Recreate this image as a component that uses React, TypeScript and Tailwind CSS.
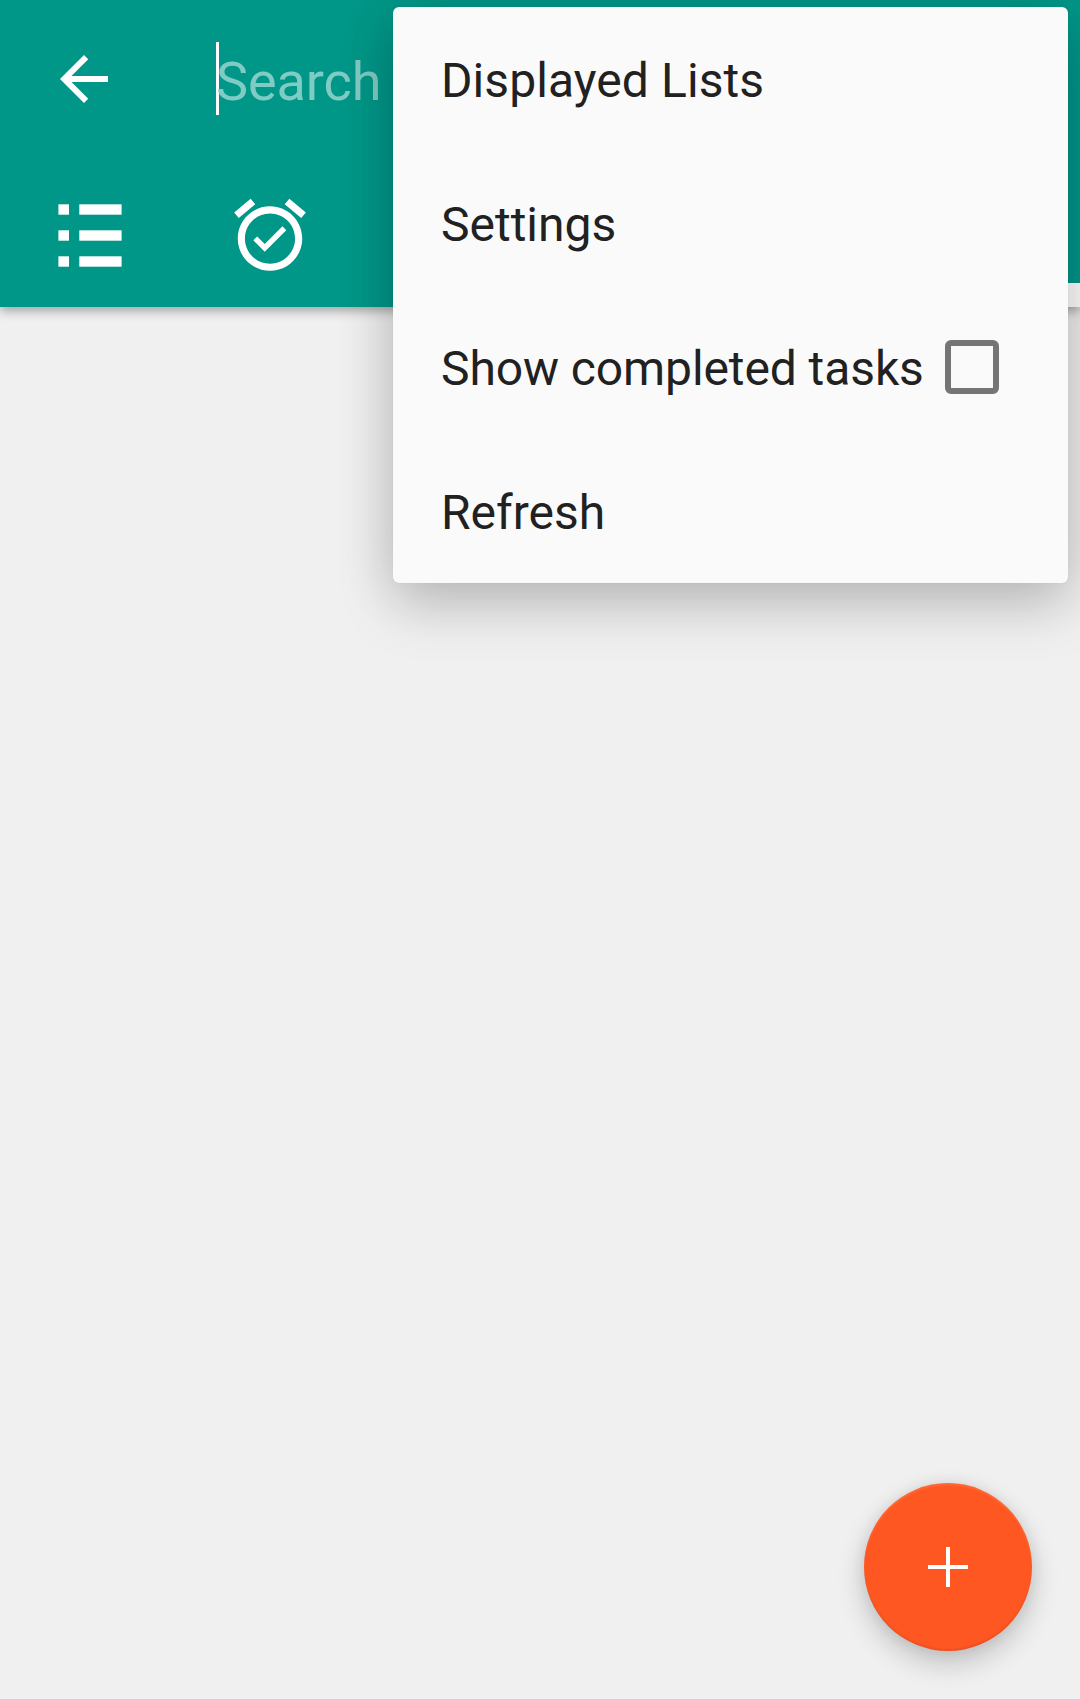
import type { ReactNode } from "react";

function BackArrow() {
  return (
    <svg className="h-[72px] w-[72px] shrink-0" viewBox="0 0 24 24" fill="white">
      <path d="M20 11H7.83l5.59-5.59L12 4l-8 8 8 8 1.41-1.41L7.83 13H20v-2z" />
    </svg>
  );
}

function ListIcon() {
  return (
    <svg className="h-[63px] w-[64px]" viewBox="0 0 64 63" fill="white">
      {[0.3, 26.3, 52.3].map((y) => (
        <g key={y}>
          <rect x="0.4" y={y} width="10.6" height="10.4" />
          <rect x="21.3" y={y} width="42.3" height="10.4" />
        </g>
      ))}
    </svg>
  );
}

function AlarmIcon() {
  return (
    <svg className="h-[86px] w-[86px]" viewBox="0 0 24 24" fill="white">
      <path d="M22 5.72l-4.6-3.86-1.29 1.53 4.6 3.86L22 5.72zM7.88 3.39L6.6 1.86 2 5.71l1.29 1.53 4.59-3.85zM12 4c-4.97 0-9 4.03-9 9s4.02 9 9 9c4.97 0 9-4.03 9-9s-4.03-9-9-9zm0 16c-3.87 0-7-3.13-7-7s3.13-7 7-7 7 3.13 7 7-3.13 7-7 7zm-1.46-5.47L8.41 12.4l-1.06 1.06 3.18 3.18 6-6-1.06-1.06-4.93 4.95z" />
    </svg>
  );
}

function MenuItem({
  label,
  tracking = "tracking-normal",
  children,
}: {
  label: string;
  tracking?: string;
  children?: ReactNode;
}) {
  return (
    <li className="flex h-[144px] items-center pl-[48px] pr-[69px]">
      <span className={`flex-1 whitespace-nowrap pt-[4px] ${tracking}`}>{label}</span>
      {children}
    </li>
  );
}

export default function App() {
  return (
    <div className="relative flex h-[1699px] w-[1080px] flex-col overflow-hidden bg-[#f0f0f0] font-['Roboto',sans-serif]">
      <header className="flex h-[307px] flex-col bg-[#009788] shadow-[0_4px_10px_rgba(0,0,0,0.32)]">
        <div className="flex h-[158px] items-center pl-[48px]">
          <BackArrow />
          <div className="-mt-[2px] ml-[96px] h-[73px] w-[3px] bg-white" />
          <span className="-ml-[3px] pt-[6px] text-[54px] leading-[64px] tracking-[-0.1px] text-[#80cbc3]">
            Search
          </span>
        </div>
        <div className="flex h-[149px] items-start justify-between">
          <div className="flex">
            <div className="flex w-[180px] pl-[58px] pt-[46px]">
              <ListIcon />
            </div>
            <div className="flex w-[180px] justify-center pt-[34px]">
              <AlarmIcon />
            </div>
          </div>
          <div className="h-full w-[180px] pt-[125px]">
            <div className="h-[24px] bg-white" />
          </div>
        </div>
      </header>

      <ul className="absolute left-[393px] top-[7px] w-[675px] rounded-[6px] bg-[#fafafa] text-[48px] leading-[56px] text-[#212121] shadow-[0_24px_56px_rgba(0,0,0,0.17),0_4px_56px_rgba(0,0,0,0.12),0_0_1px_rgba(0,0,0,0.15)]">
        <MenuItem label="Displayed Lists" tracking="tracking-[0.08px]" />
        <MenuItem label="Settings" />
        <MenuItem label="Show completed tasks" tracking="tracking-[-0.1px]">
          <span className="-mt-[1px] h-[54px] w-[54px] rounded-[6px] border-[6px] border-[#757575]" />
        </MenuItem>
        <MenuItem label="Refresh" />
      </ul>

      <button className="absolute left-[864px] top-[1483px] flex h-[168px] w-[168px] items-center justify-center rounded-full bg-[#ff5722] shadow-[0_12px_28px_rgba(0,0,0,0.2),0_0_14px_rgba(0,0,0,0.07),inset_0_2px_2px_rgba(255,255,255,0.12),inset_0_-2px_2px_rgba(0,0,0,0.08)]">
        <svg className="h-[42px] w-[42px]" viewBox="0 0 42 42" fill="white">
          <path d="M19 1h4v18h18v4H23v18h-4V23H1v-4h18z" />
        </svg>
      </button>
    </div>
  );
}
